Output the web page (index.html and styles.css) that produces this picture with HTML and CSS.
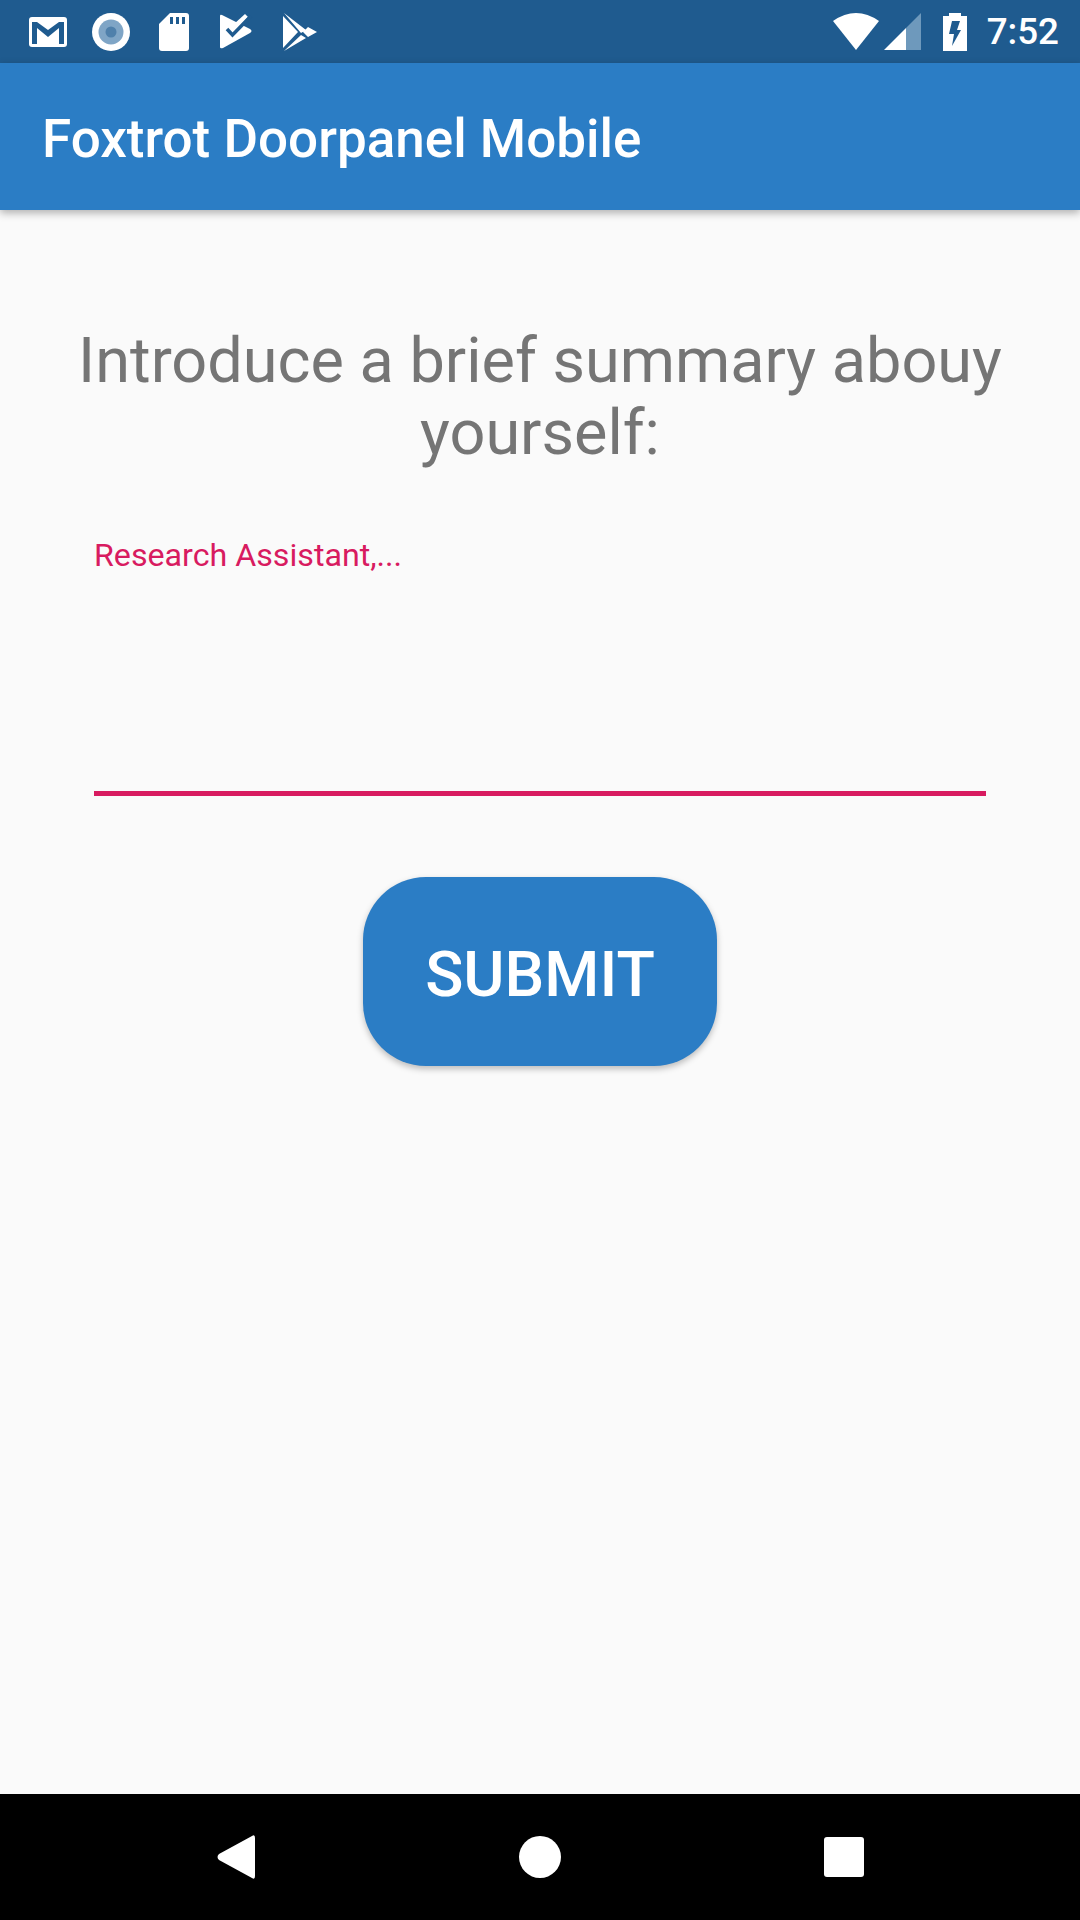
FILE: index.html
```html
<!DOCTYPE html>
<html lang="en">

<head>
    <meta charset="UTF-8">
    <meta name="viewport" content="width=device-width, initial-scale=1.0">
    <title>Foxtrot Doorpanel Mobile</title>
    <link rel="stylesheet" href="styles.css">
</head>

<body>
    <div id="app">
        <!-- Status bar -->
        <div class="status-bar">
            <div class="status-icons">
                <div class="slot">
                    <svg width="38" height="30" viewBox="0 0 38 30">
                        <rect width="38" height="30" rx="3" fill="#fff"/>
                        <path d="M3 5V27H8V11L19 20L30 11V27H35V5H30L19 13L8 5Z" fill="#1f5b8f"/>
                    </svg>
                </div>
                <div class="slot">
                    <svg width="38" height="38" viewBox="0 0 38 38">
                        <circle cx="19" cy="19" r="19" fill="#fff"/>
                        <circle cx="19" cy="19" r="12.500" fill="#7fa5c6"/>
                        <circle cx="19" cy="19" r="5.500" fill="#4f80ab"/>
                    </svg>
                </div>
                <div class="slot">
                    <svg width="30" height="38" viewBox="0 0 30 38">
                        <path d="M11 0H27Q30 0 30 3V35Q30 38 27 38H3Q0 38 0 35V11Z" fill="#fff"/>
                        <path d="M11 4H14V11H11ZM17 4H20V11H17ZM23 4H26V11H23Z" fill="#1f5b8f"/>
                    </svg>
                </div>
                <div class="slot">
                    <svg width="33" height="35" viewBox="0 0 33 35">
                        <path d="M0 2Q0 0 2 1L30 15Q33 17 30 19L3 34Q0 35 0 33Z" fill="#fff"/>
                        <path d="M14 10L25 0L28 3L18 14Z" fill="#fff"/>
                        <path d="M7 15L12.500 21L31 2" fill="none" stroke="#1f5b8f" stroke-width="3.500"/>
                    </svg>
                </div>
                <div class="slot">
                    <svg width="34" height="38" viewBox="0 0 34 38">
                        <path d="M1 0L23 17L18 20ZM0 3L15 19L0 35ZM18 22L1 38L23 25ZM25 14L34 19L25 24L20 19Z" fill="#fff"/>
                    </svg>
                </div>
            </div>
            <div class="status-right">
                <svg width="46" height="37" viewBox="0 0 46 37">
                    <path d="M0 8Q23 -8 46 8L23 37Z" fill="#fff"/>
                </svg>
                <svg class="ico-signal" width="37" height="37" viewBox="0 0 37 37">
                    <path d="M37 0V37H22V15Z" fill="#6e99bc"/>
                    <path d="M22 15V37H0Z" fill="#fff"/>
                </svg>
                <svg class="ico-battery" width="24" height="38" viewBox="0 0 24 38">
                    <path d="M6 3V0H18V3H24V38H0V3Z" fill="#fff"/>
                    <path d="M9 8H17L14 17H18L9 33L11 21H6Z" fill="#1f5b8f"/>
                </svg>
                <span class="clock">7:52</span>
            </div>
        </div>

        <!-- App bar -->
        <header class="app-bar">
            <h1>Foxtrot Doorpanel Mobile</h1>
        </header>

        <main class="content">
            <h2 class="prompt">Introduce a brief summary abouy yourself:</h2>
            <div class="field">
                <span class="hint">Research Assistant,...</span>
            </div>
            <button class="submit-btn">SUBMIT</button>
        </main>

        <!-- Navigation bar -->
        <nav class="nav-bar">
            <svg width="38" height="44" viewBox="0 0 38 44">
                <path d="M35 1Q38 -1 38 3V41Q38 45 35 43L2 25Q-1 22 2 19Z" fill="#fff"/>
            </svg>
            <svg width="42" height="42" viewBox="0 0 42 42">
                <circle cx="21" cy="21" r="21" fill="#fff"/>
            </svg>
            <svg width="40" height="40" viewBox="0 0 40 40">
                <rect width="40" height="40" rx="3" fill="#fff"/>
            </svg>
        </nav>
    </div>
</body>

</html>
```

FILE: styles.css
```css
* {
    box-sizing: border-box;
}

body {
    margin: 0;
    padding: 0;
    font-family: Roboto, sans-serif;
    background-color: #fafafa;
}

#app {
    display: flex;
    flex-direction: column;
    width: 1080px;
    height: 1920px;
    overflow: hidden;
}

.status-bar {
    display: flex;
    justify-content: space-between;
    align-items: center;
    height: 63px;
    padding: 0 21px 0 16px;
    background-color: #1f5b8f;
    color: #fff;
}

.status-icons,
.status-right {
    display: flex;
    align-items: center;
}

.slot {
    display: flex;
    justify-content: center;
    align-items: center;
    width: 63px;
}

.ico-signal {
    margin-left: 5px;
}

.ico-battery {
    margin-left: 22px;
}

.clock {
    margin-left: 20px;
    font-size: 36.750px;
    font-weight: 500;
}

.app-bar {
    position: relative;
    height: 147px;
    padding: 5px 0 0 42px;
    display: flex;
    align-items: center;
    background-color: #2b7dc5;
    box-shadow: 0 3px 8px rgba(0, 0, 0, 0.3);
}

.app-bar h1 {
    margin: 0;
    font-size: 53px;
    font-weight: 500;
    color: #fff;
}

.content {
    flex: 1;
    display: flex;
    flex-direction: column;
    align-items: center;
    padding: 115px 63px 0;
}

.prompt {
    margin: 0;
    width: 100%;
    font-size: 63px;
    line-height: 72px;
    font-weight: 400;
    text-align: center;
    color: #757575;
}

.field {
    flex-shrink: 0;
    width: 892px;
    height: 277px;
    margin-top: 50px;
    padding-top: 17px;
    border-bottom: 5px solid #d81b60;
}

.hint {
    font-size: 32.200px;
    color: #d81b60;
}

.submit-btn {
    flex-shrink: 0;
    width: 354px;
    height: 189px;
    margin-top: 81px;
    padding-top: 6px;
    border: none;
    border-radius: 63px;
    background-color: #2b7dc5;
    color: #fff;
    font-family: Roboto, sans-serif;
    font-size: 63px;
    font-weight: 500;
    box-shadow: 0 3px 6px rgba(0, 0, 0, 0.25);
}

.nav-bar {
    display: flex;
    justify-content: space-between;
    align-items: center;
    height: 126px;
    padding: 0 216px 0 217px;
    background-color: #000;
}
```
